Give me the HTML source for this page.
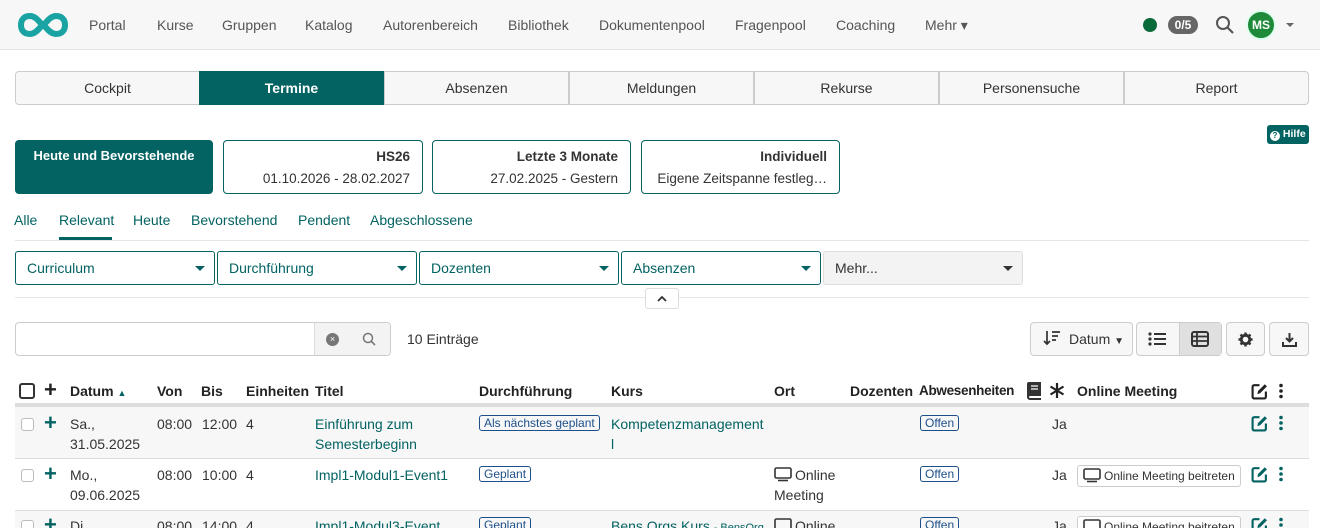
<!DOCTYPE html>
<html><head><meta charset="utf-8"><style>
*{box-sizing:border-box;margin:0;padding:0}
html,body{width:1320px;height:528px;overflow:hidden}
body{background:#fff;font-family:"Liberation Sans",sans-serif;font-size:14px;color:#333;position:relative}
.a{position:absolute;white-space:nowrap}
.nav{position:absolute;left:0;top:0;width:1320px;height:50px;background:#f7f7f7;border-bottom:1px solid #e3e3e3}
.nav span{position:absolute;top:17px;color:#555;font-size:14px}
.tab{position:absolute;top:71px;height:34px;border:1px solid #ccc;background:#f7f7f7;text-align:center;line-height:32px;font-size:14px;color:#333}
.card{position:absolute;top:140px;height:54px;border:1px solid #036262;border-radius:4px;text-align:right;padding:5px 12px;font-size:13.5px;line-height:22px;white-space:nowrap;overflow:hidden}
.sub{position:absolute;top:212px;color:#036262;font-size:14px}
.flt{position:absolute;top:251px;height:34px;border:1px solid #036262;border-radius:3px;color:#036262;padding:0 11px;line-height:32px;font-size:14px}
.car{position:absolute;right:9px;top:14px;width:0;height:0;border-left:5px solid transparent;border-right:5px solid transparent;border-top:5px solid #036262}
.btn{position:absolute;top:322px;height:34px;border:1px solid #ccc;border-radius:4px;background:#f7f7f7}
.th{position:absolute;top:383px;font-weight:bold;font-size:14px;color:#222}
.td{position:absolute;font-size:14px;color:#333;line-height:20px;white-space:nowrap}
.lk{color:#036262}
.bd{position:absolute;border:1px solid #1d4f8a;color:#1d4f8a;border-radius:3px;font-size:12px;padding:0 4px;line-height:14px}
.cb{position:absolute;width:13px;height:13px;border:1px solid #bbb;border-radius:3px;background:#fff}
.pl{position:absolute;color:#036262;font-size:22px;font-weight:bold;line-height:20px}
.om{position:absolute;border:1px solid #ccc;border-radius:3px;font-size:12px;padding:1px 5px 1px 26px;line-height:18px;background:#fff}
</style></head><body>
<svg width="0" height="0" style="position:absolute"><defs>
<symbol id="ed" viewBox="0 0 16 16"><path d="M8 2H3a1.5 1.5 0 0 0-1.5 1.5v9.5A1.5 1.5 0 0 0 3 14.5h9.5A1.5 1.5 0 0 0 14 13V8" fill="none" stroke="currentColor" stroke-width="2"/><path d="M6 10.5l.6-3L13 1.2l2 2-6.4 6.4z" fill="currentColor"/></symbol>
<symbol id="dt" viewBox="0 0 6 16"><circle cx="3" cy="2.5" r="1.8" fill="currentColor"/><circle cx="3" cy="8" r="1.8" fill="currentColor"/><circle cx="3" cy="13.5" r="1.8" fill="currentColor"/></symbol>
<symbol id="mo" viewBox="0 0 18 15"><rect x="1" y="1" width="16" height="10" rx="1.5" fill="none" stroke="#333" stroke-width="1.6"/><path d="M4 13.5h10" stroke="#333" stroke-width="1.6"/></symbol>
</defs></svg>
<div class="nav">
<svg class="a" style="left:17px;top:12px" width="52" height="26" viewBox="0 0 52 26"><path d="M13 4C5 4 4 10 4 13s1 9 9 9c7 0 11-9 13-9s6 9 13 9c8 0 9-6 9-9s-1-9-9-9c-7 0-11 9-13 9S20 4 13 4z" fill="none" stroke="#1aa3a3" stroke-width="6"/></svg>
<span style="left:89px">Portal</span><span style="left:157px">Kurse</span><span style="left:222px">Gruppen</span><span style="left:305px">Katalog</span><span style="left:383px">Autorenbereich</span><span style="left:508px">Bibliothek</span><span style="left:599px">Dokumentenpool</span><span style="left:735px">Fragenpool</span><span style="left:836px">Coaching</span><span style="left:925px">Mehr ▾</span>
<div class="a" style="left:1143px;top:18px;width:14px;height:14px;border-radius:50%;background:#0b6a3a"></div>
<div class="a" style="left:1168px;top:16px;width:30px;height:18px;border-radius:9px;background:#666;color:#fff;font-size:12px;font-weight:bold;text-align:center;line-height:18px">0/5</div>
<svg class="a" style="left:1215px;top:15px" width="20" height="20" viewBox="0 0 20 20"><circle cx="8" cy="8" r="6" fill="none" stroke="#555" stroke-width="2"/><path d="M12.5 12.5L18 18" stroke="#555" stroke-width="2.2"/></svg>
<div class="a" style="left:1246px;top:10px;width:30px;height:30px;border-radius:50%;background:#1e8a3a;border:2px solid #dfe;color:#fff;font-size:12px;font-weight:bold;text-align:center;line-height:26px">MS</div>
<div class="a" style="left:1286px;top:23px;border-left:4px solid transparent;border-right:4px solid transparent;border-top:4px solid #666"></div>
</div>
<div class="tab" style="left:15px;width:185px;border-radius:4px 0 0 4px">Cockpit</div>
<div class="tab" style="left:199px;width:185px;background:#036262;border-color:#036262;color:#fff;font-weight:bold">Termine</div>
<div class="tab" style="left:384px;width:185px">Absenzen</div>
<div class="tab" style="left:569px;width:185px">Meldungen</div>
<div class="tab" style="left:754px;width:185px">Rekurse</div>
<div class="tab" style="left:939px;width:185px">Personensuche</div>
<div class="tab" style="left:1124px;width:185px;border-radius:0 4px 4px 0">Report</div>
<div class="a" style="left:1267px;top:125px;width:42px;height:19px;background:#036262;border-radius:3px;color:#fff;font-size:10.5px;font-weight:bold;line-height:19px;padding-left:3px"><span style="display:inline-block;width:10px;height:10px;border-radius:50%;background:#fff;color:#036262;font-size:8px;text-align:center;line-height:10px;vertical-align:-1px">?</span> Hilfe</div>
<div class="card" style="left:15px;width:198px;background:#036262;color:#fff;font-weight:bold;text-align:center;padding:4px 4px;font-size:13px">Heute und Bevorstehende</div>
<div class="card" style="left:223px;width:200px"><b>HS26</b><br>01.10.2026 - 28.02.2027</div>
<div class="card" style="left:432px;width:199px"><b>Letzte 3 Monate</b><br>27.02.2025 - Gestern</div>
<div class="card" style="left:641px;width:199px"><b>Individuell</b><br>Eigene Zeitspanne festleg…</div>
<span class="sub" style="left:14px">Alle</span><span class="sub" style="left:59px">Relevant</span><span class="sub" style="left:133px">Heute</span><span class="sub" style="left:191px">Bevorstehend</span><span class="sub" style="left:298px">Pendent</span><span class="sub" style="left:370px">Abgeschlossene</span>
<div class="a" style="left:15px;top:240px;width:1294px;height:1px;background:#e5e5e5"></div>
<div class="a" style="left:59px;top:237px;width:53px;height:3px;background:#036262"></div>
<div class="flt" style="left:15px;width:200px">Curriculum<div class="car"></div></div>
<div class="flt" style="left:217px;width:200px">Durchführung<div class="car"></div></div>
<div class="flt" style="left:419px;width:200px">Dozenten<div class="car"></div></div>
<div class="flt" style="left:621px;width:200px">Absenzen<div class="car"></div></div>
<div class="flt" style="left:823px;width:200px;border-color:#ddd;background:#f3f3f3;color:#333">Mehr...<div class="car" style="border-top-color:#333"></div></div>
<div class="a" style="left:15px;top:297px;width:1294px;height:1px;background:#e5e5e5"></div>
<div class="a" style="left:645px;top:288px;width:34px;height:21px;border:1px solid #ddd;border-radius:3px;background:#fff;text-align:center"><svg width="12" height="12" viewBox="0 0 12 12" style="margin-top:4px"><path d="M2 8l4-4 4 4" fill="none" stroke="#333" stroke-width="1.8"/></svg></div>
<div class="a" style="left:15px;top:322px;width:376px;height:34px;border:1px solid #ccc;border-radius:4px"></div>
<div class="a" style="left:314px;top:323px;width:76px;height:32px;background:#f3f3f3;border-left:1px solid #ddd;border-radius:0 4px 4px 0"></div>
<div class="a" style="left:326px;top:333px;width:13px;height:13px;border-radius:50%;background:#777;color:#fff;font-size:9px;text-align:center;line-height:13px">×</div>
<svg class="a" style="left:362px;top:332px" width="14" height="14" viewBox="0 0 14 14"><circle cx="6" cy="6" r="4.5" fill="none" stroke="#777" stroke-width="1.5"/><path d="M9.3 9.3L13 13" stroke="#777" stroke-width="1.6"/></svg>
<span class="a" style="left:407px;top:331px">10 Einträge</span>
<div class="btn" style="left:1030px;width:103px;padding:8px 0 0 38px;font-size:14px;color:#333">Datum <span style="font-size:10px">▼</span></div>
<svg class="a" style="left:1043px;top:330px" width="18" height="16" viewBox="0 0 18 16"><path d="M4 1v13M1 11l3 3 3-3" fill="none" stroke="#333" stroke-width="1.7"/><path d="M9 2h8M9 6h6M9 10h4" stroke="#333" stroke-width="1.7"/></svg>
<div class="btn" style="left:1136px;width:86px"></div>
<div class="a" style="left:1179px;top:323px;width:42px;height:32px;background:#e0e0e0;border-left:1px solid #ccc"></div>
<svg class="a" style="left:1148px;top:331px" width="18" height="16" viewBox="0 0 18 16"><g fill="#333"><circle cx="2" cy="3" r="1.6"/><circle cx="2" cy="8" r="1.6"/><circle cx="2" cy="13" r="1.6"/><rect x="6" y="2" width="12" height="2"/><rect x="6" y="7" width="12" height="2"/><rect x="6" y="12" width="12" height="2"/></g></svg>
<svg class="a" style="left:1191px;top:331px" width="18" height="16" viewBox="0 0 18 16"><rect x="1" y="1" width="16" height="14" rx="2" fill="none" stroke="#333" stroke-width="2"/><path d="M1 5.5h16M1 10h16M6 1v14" stroke="#333" stroke-width="1.8"/></svg>
<div class="btn" style="left:1226px;width:39px"><svg style="margin:9px 0 0 11px" width="15" height="15" viewBox="0 0 16 16"><circle cx="8" cy="8" r="4.5" fill="none" stroke="#333" stroke-width="3"/><path d="M8 0.5v3M8 12.5v3M0.5 8h3M12.5 8h3M2.7 2.7l2.1 2.1M11.2 11.2l2.1 2.1M2.7 13.3l2.1-2.1M11.2 4.8l2.1-2.1" stroke="#333" stroke-width="2.6"/></svg></div>
<div class="btn" style="left:1269px;width:40px"><svg style="margin:9px 0 0 12px" width="15" height="15" viewBox="0 0 15 15"><path d="M7.5 1v8M4 6l3.5 3.5L11 6" fill="none" stroke="#333" stroke-width="2"/><path d="M1 10v4h13v-4" fill="none" stroke="#333" stroke-width="2"/></svg></div>
<div class="a" style="left:19px;top:383px;width:16px;height:16px;border:2px solid #333;border-radius:3px"></div>
<div class="pl" style="left:44px;top:380px;color:#222">+</div>
<span class="th" style="left:70px">Datum <span style="color:#036262;font-size:9px">▲</span></span><span class="th" style="left:157px">Von</span><span class="th" style="left:201px">Bis</span><span class="th" style="left:246px">Einheiten</span><span class="th" style="left:315px">Titel</span><span class="th" style="left:479px">Durchführung</span><span class="th" style="left:611px">Kurs</span><span class="th" style="left:774px">Ort</span><span class="th" style="left:850px">Dozenten</span><span class="th" style="left:919px;font-size:13.5px;letter-spacing:-0.3px">Abwesenheiten</span>
<svg class="a" style="left:1027px;top:382px" width="14" height="18" viewBox="0 0 14 18"><path d="M2 0h12v14H3a1 1 0 0 0 0 2h11v2H3a3 3 0 0 1-3-3V2a2 2 0 0 1 2-2z" fill="#333"/><path d="M4 4h7M4 7h7" stroke="#fff" stroke-width="1.3"/></svg>
<svg class="a" style="left:1049px;top:382px" width="16" height="17" viewBox="0 0 16 17"><path d="M8 1v15M1.5 4.5l13 8M14.5 4.5l-13 8" stroke="#222" stroke-width="2.2"/></svg>
<span class="th" style="left:1077px">Online Meeting</span>
<svg class="a" style="left:1251px;top:383px;color:#222" width="17" height="17"><use href="#ed"/></svg>
<svg class="a" style="left:1278px;top:383px;color:#222" width="6" height="16"><use href="#dt"/></svg>
<div class="a" style="left:15px;top:403px;width:1294px;height:4px;background:#ddd"></div>
<div class="a" style="left:15px;top:407px;width:1294px;height:52px;background:#f7f7f7;border-bottom:1px solid #ddd"></div>
<div class="a" style="left:15px;top:510px;width:1294px;height:1px;background:#ddd"></div>
<div class="a" style="left:15px;top:511px;width:1294px;height:17px;background:#f7f7f7"></div>
<!-- row1 -->
<div class="cb" style="left:21px;top:418px"></div><div class="pl" style="left:44px;top:413px">+</div>
<div class="td" style="left:70px;top:414px">Sa.,<br>31.05.2025</div><div class="td" style="left:157px;top:414px">08:00</div><div class="td" style="left:202px;top:414px">12:00</div><div class="td" style="left:246px;top:414px">4</div>
<div class="td lk" style="left:315px;top:414px">Einführung zum<br>Semesterbeginn</div>
<div class="bd" style="left:479px;top:415px">Als nächstes geplant</div>
<div class="td lk" style="left:611px;top:414px">Kompetenzmanagement<br>l</div>
<div class="bd" style="left:920px;top:415px">Offen</div>
<div class="td" style="left:1052px;top:414px">Ja</div>
<svg class="a lk" style="left:1251px;top:415px" width="17" height="17"><use href="#ed"/></svg>
<svg class="a lk" style="left:1278px;top:415px" width="6" height="16"><use href="#dt"/></svg>
<!-- row2 -->
<div class="cb" style="left:21px;top:469px"></div><div class="pl" style="left:44px;top:464px">+</div>
<div class="td" style="left:70px;top:465px">Mo.,<br>09.06.2025</div><div class="td" style="left:157px;top:465px">08:00</div><div class="td" style="left:202px;top:465px">10:00</div><div class="td" style="left:246px;top:465px">4</div>
<div class="td lk" style="left:315px;top:465px">Impl1-Modul1-Event1</div>
<div class="bd" style="left:479px;top:466px">Geplant</div>
<svg class="a" style="left:774px;top:467px" width="18" height="15"><use href="#mo"/></svg>
<div class="td" style="left:774px;top:465px"><span style="padding-left:21px">Online</span><br>Meeting</div>
<div class="bd" style="left:920px;top:466px">Offen</div>
<div class="td" style="left:1052px;top:465px">Ja</div>
<div class="om" style="left:1077px;top:465px">Online Meeting beitreten</div>
<svg class="a lk" style="left:1251px;top:466px" width="17" height="17"><use href="#ed"/></svg>
<svg class="a lk" style="left:1278px;top:466px" width="6" height="16"><use href="#dt"/></svg>
<!-- row3 -->
<div class="cb" style="left:21px;top:520px"></div><div class="pl" style="left:44px;top:515px">+</div>
<div class="td" style="left:70px;top:516px">Di.,</div><div class="td" style="left:157px;top:516px">08:00</div><div class="td" style="left:202px;top:516px">14:00</div><div class="td" style="left:246px;top:516px">4</div>
<div class="td lk" style="left:315px;top:516px">Impl1-Modul3-Event</div>
<div class="bd" style="left:479px;top:517px">Geplant</div>
<div class="td lk" style="left:611px;top:516px">Bens Orgs Kurs <span style="font-size:11px">- BensOrg</span></div>
<svg class="a" style="left:774px;top:518px" width="18" height="15"><use href="#mo"/></svg>
<div class="td" style="left:795px;top:516px">Online</div>
<div class="bd" style="left:920px;top:517px">Offen</div>
<div class="td" style="left:1052px;top:516px">Ja</div>
<div class="om" style="left:1077px;top:516px">Online Meeting beitreten</div>
<svg class="a lk" style="left:1251px;top:517px" width="17" height="17"><use href="#ed"/></svg>
<svg class="a lk" style="left:1278px;top:517px" width="6" height="16"><use href="#dt"/></svg>
<svg class="a" style="left:1083px;top:468px" width="18" height="15"><use href="#mo"/></svg>
<svg class="a" style="left:1083px;top:519px" width="18" height="15"><use href="#mo"/></svg>
</body></html>
